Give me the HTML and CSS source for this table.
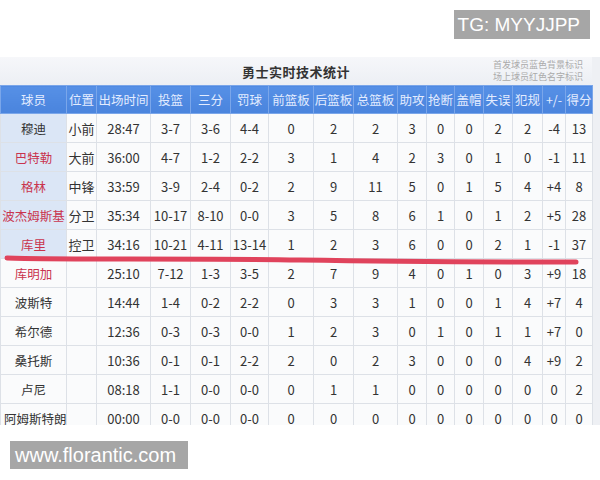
FILE: index.html
```html
<!DOCTYPE html>
<html lang="zh">
<head>
<meta charset="utf-8">
<link rel="stylesheet" href="styles.css">
</head>
<body>
<div class="top">
  <div class="badge">TG: MYYJJPP</div>
</div>
<div class="shot">
  <div class="titlebar">
    <div></div>
    <div class="title">勇士实时技术统计</div>
    <div class="notes"><div>首发球员蓝色背景标识</div><div>场上球员红色名字标识</div></div>
  </div>
  <table class="stats">
    <colgroup>
      <col style="width:66px"><col style="width:30px"><col style="width:54px"><col style="width:40px"><col style="width:40px"><col style="width:38px"><col style="width:45px"><col style="width:40px"><col style="width:44px"><col style="width:29px"><col style="width:28px"><col style="width:29px"><col style="width:29px"><col style="width:30px"><col style="width:23px"><col style="width:27px">
    </colgroup>
    <thead>
      <tr><th>球员</th><th>位置</th><th>出场时间</th><th>投篮</th><th>三分</th><th>罚球</th><th>前篮板</th><th>后篮板</th><th>总篮板</th><th>助攻</th><th>抢断</th><th>盖帽</th><th>失误</th><th>犯规</th><th>+/-</th><th>得分</th></tr>
    </thead>
    <tbody>
      <tr><td class="name starter">穆迪</td><td>小前</td><td>28:47</td><td>3-7</td><td>3-6</td><td>4-4</td><td>0</td><td>2</td><td>2</td><td>3</td><td>0</td><td>0</td><td>2</td><td>2</td><td>-4</td><td>13</td></tr>
      <tr><td class="name starter on">巴特勒</td><td>大前</td><td>36:00</td><td>4-7</td><td>1-2</td><td>2-2</td><td>3</td><td>1</td><td>4</td><td>2</td><td>3</td><td>0</td><td>1</td><td>0</td><td>-1</td><td>11</td></tr>
      <tr><td class="name starter on">格林</td><td>中锋</td><td>33:59</td><td>3-9</td><td>2-4</td><td>0-2</td><td>2</td><td>9</td><td>11</td><td>5</td><td>0</td><td>1</td><td>5</td><td>4</td><td>+4</td><td>8</td></tr>
      <tr><td class="name starter on">波杰姆斯基</td><td>分卫</td><td>35:34</td><td>10-17</td><td>8-10</td><td>0-0</td><td>3</td><td>5</td><td>8</td><td>6</td><td>1</td><td>0</td><td>1</td><td>2</td><td>+5</td><td>28</td></tr>
      <tr><td class="name starter on">库里</td><td>控卫</td><td>34:16</td><td>10-21</td><td>4-11</td><td>13-14</td><td>1</td><td>2</td><td>3</td><td>6</td><td>0</td><td>0</td><td>2</td><td>1</td><td>-1</td><td>37</td></tr>
      <tr><td class="name on">库明加</td><td></td><td>25:10</td><td>7-12</td><td>1-3</td><td>3-5</td><td>2</td><td>7</td><td>9</td><td>4</td><td>0</td><td>1</td><td>0</td><td>3</td><td>+9</td><td>18</td></tr>
      <tr><td class="name">波斯特</td><td></td><td>14:44</td><td>1-4</td><td>0-2</td><td>2-2</td><td>0</td><td>3</td><td>3</td><td>1</td><td>0</td><td>0</td><td>1</td><td>4</td><td>+7</td><td>4</td></tr>
      <tr><td class="name">希尔德</td><td></td><td>12:36</td><td>0-3</td><td>0-3</td><td>0-0</td><td>1</td><td>2</td><td>3</td><td>0</td><td>1</td><td>0</td><td>1</td><td>1</td><td>+7</td><td>0</td></tr>
      <tr><td class="name">桑托斯</td><td></td><td>10:36</td><td>0-1</td><td>0-1</td><td>2-2</td><td>2</td><td>0</td><td>2</td><td>3</td><td>0</td><td>0</td><td>0</td><td>4</td><td>+9</td><td>2</td></tr>
      <tr><td class="name">卢尼</td><td></td><td>08:18</td><td>1-1</td><td>0-0</td><td>0-0</td><td>0</td><td>1</td><td>1</td><td>0</td><td>0</td><td>0</td><td>0</td><td>0</td><td>0</td><td>2</td></tr>
      <tr><td class="name long">阿姆斯特朗</td><td></td><td>00:00</td><td>0-0</td><td>0-0</td><td>0-0</td><td>0</td><td>0</td><td>0</td><td>0</td><td>0</td><td>0</td><td>0</td><td>0</td><td>0</td><td>0</td></tr>
    </tbody>
  </table>
  <svg class="mark" width="600" height="368" viewBox="0 0 600 368">
    <path d="M7 201 C 60 203, 180 201, 300 203 S 500 205, 576 205" fill="none" stroke="#e0435c" stroke-width="5" stroke-linecap="round"/>
  </svg>
</div>
<div class="bottom">
  <div class="badge site">www.florantic.com</div>
</div>
</body>
</html>
```
FILE: styles.css
```css
html, body {
  margin: 0;
  padding: 0;
  background: #ffffff;
}
body {
  width: 600px;
  height: 480px;
  overflow: hidden;
  font-family: "Noto Sans CJK SC", "Noto Sans", sans-serif;
}
.top {
  height: 57px;
  display: flex;
  justify-content: flex-end;
  align-items: flex-start;
  padding: 10px 10px 0 0;
  box-sizing: border-box;
}
.badge {
  background: #a6a6a6;
  color: #ffffff;
  font-family: "Liberation Sans", Arial, sans-serif;
  font-size: 19px;
  line-height: 29px;
  height: 29px;
  padding: 0 10px 0 4px;
}
.shot {
  position: relative;
  height: 368px;
  overflow: hidden;
  background: #eef0f4;
}
.titlebar {
  width: 592px;
  height: 28px;
  display: grid;
  grid-template-columns: 1fr auto 1fr;
  align-items: center;
  background: linear-gradient(#f6f7fa, #eceff4);
}
.title {
  font-size: 13px;
  font-weight: bold;
  color: #333;
  letter-spacing: 0.5px;
}
.notes {
  justify-self: end;
  padding-right: 9px;
  font-size: 9px;
  line-height: 12px;
  color: #aaaaaa;
  text-align: right;
}
.stats {
  border-collapse: collapse;
  table-layout: fixed;
  width: 592px;
  font-size: 13px;
  color: #333;
  background: #fafbfc;
}
.stats th, .stats td {
  border: 1px solid #dde1e7;
  text-align: center;
  padding: 0;
  white-space: nowrap;
  overflow: visible;
}
.stats th {
  height: 27px;
  background: linear-gradient(#5690e6, #4a84dd);
  color: #e3ecff;
  font-weight: normal;
  font-size: 12.5px;
  border-color: #7aa6ea;
}
.stats td {
  height: 28px;
}
.stats td.starter {
  background: #dbe6f6;
}
.stats td.name {
  font-size: 12.5px;
}
.stats td.on {
  color: #c9344e;
}
.stats td.long {
  text-align: left;
  padding-left: 3px;
}
.mark {
  position: absolute;
  left: 0;
  top: 0;
  pointer-events: none;
}
.bottom {
  padding: 16px 0 0 10px;
  display: flex;
}
.site {
  font-size: 20px;
  height: 28px;
  line-height: 28px;
  padding: 0 12px 0 5px;
}
```
